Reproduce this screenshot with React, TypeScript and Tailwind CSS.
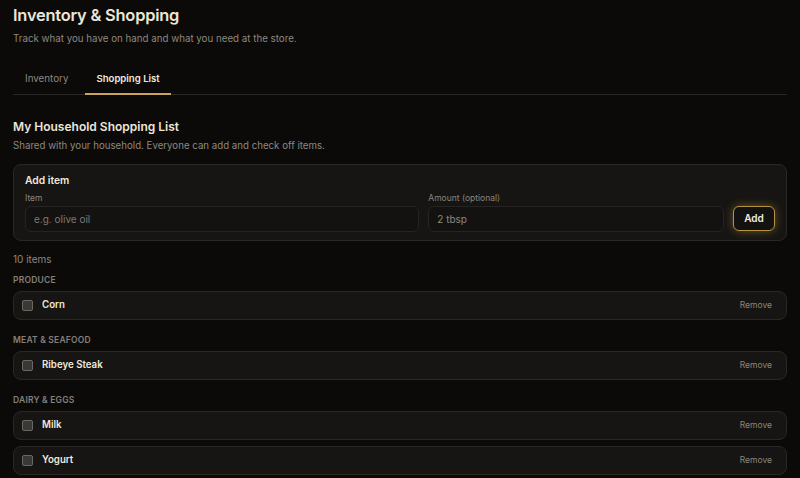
import { useState } from 'react';

type Item = { id: number; name: string; group: string };

const items: Item[] = [
  { id: 1, name: 'Corn', group: 'Produce' },
  { id: 2, name: 'Ribeye Steak', group: 'Meat & Seafood' },
  { id: 3, name: 'Milk', group: 'Dairy & Eggs' },
  { id: 4, name: 'Yogurt', group: 'Dairy & Eggs' },
];

const groups = ['Produce', 'Meat & Seafood', 'Dairy & Eggs'];

function Row({ item }: { item: Item }) {
  const [checked, setChecked] = useState(false);
  return (
    <div className="flex h-[29px] items-center rounded-[8px] border border-[#2a2825] bg-[#161513] pl-[8px] pr-[14px]">
      <button
        onClick={() => setChecked(!checked)}
        className="h-[11px] w-[11px] rounded-[2px] border border-[#6b6761] bg-[#3a3835]"
      />
      <span className="ml-[9px] text-[9.7px] font-semibold text-[#efe9dc]">{item.name}</span>
      <button className="ml-auto text-[8.5px] text-[#8a857d]">Remove</button>
    </div>
  );
}

export default function App() {
  const [tab, setTab] = useState('shopping');

  return (
    <div className="min-h-screen bg-[#0b0a09] px-[13px] pt-[4px] pb-[10px] font-['Inter',sans-serif] text-[#ece6d9]">
      <h1 className="text-[16.4px] font-semibold leading-[22px] tracking-[-0.2px]">Inventory &amp; Shopping</h1>
      <p className="mt-[5px] text-[9.75px] leading-[16px] text-[#8d887f]">
        Track what you have on hand and what you need at the store.
      </p>

      <div className="mt-[19px] flex gap-[5px] border-b border-[#2a2825]">
        <button
          onClick={() => setTab('inventory')}
          className={`-mb-px h-[29px] border-b-2 px-[12px] text-[9.8px] ${
            tab === 'inventory' ? 'border-[#c9a45a] font-semibold text-[#efe9dc]' : 'border-transparent text-[#8d887f]'
          }`}
        >
          Inventory
        </button>
        <button
          onClick={() => setTab('shopping')}
          className={`-mb-px h-[29px] border-b-2 px-[11px] text-[9.6px] ${
            tab === 'shopping' ? 'border-[#c9a45a] font-semibold text-[#efe9dc]' : 'border-transparent text-[#8d887f]'
          }`}
        >
          Shopping List
        </button>
      </div>

      <h2 className="mt-[23px] text-[12px] font-semibold leading-[18px]">My Household Shopping List</h2>
      <p className="mt-[2px] text-[9.7px] leading-[16px] text-[#8d887f]">
        Shared with your household. Everyone can add and check off items.
      </p>

      <div className="mt-[10px] rounded-[8px] border border-[#2a2825] bg-[#161513] px-[11px] pt-[8px] pb-[8px]">
        <div className="text-[10.3px] font-semibold leading-[14px] text-[#efe9dc]">Add item</div>
        <div className="mt-[5px] grid grid-cols-[4fr_3fr_42px] items-end gap-x-[9px]">
          <label className="block">
            <span className="block text-[8.5px] leading-[12px] text-[#8a857d]">Item</span>
            <input
              placeholder="e.g. olive oil"
              className="mt-[2px] h-[26px] w-full rounded-[6px] border border-[#262421] bg-[#131211] px-[8px] text-[10px] text-[#efe9dc] outline-none placeholder:text-[#7d7870]"
            />
          </label>
          <label className="block">
            <span className="block text-[8.5px] leading-[12px] text-[#8a857d]">Amount (optional)</span>
            <input
              placeholder="2 tbsp"
              className="mt-[2px] h-[26px] w-full rounded-[6px] border border-[#262421] bg-[#131211] px-[8px] text-[10px] text-[#efe9dc] outline-none placeholder:text-[#8d887f]"
            />
          </label>
          <button className="mb-[1px] h-[25px] rounded-[6px] border border-[#b8933f] bg-[#141210] text-[10px] font-semibold text-[#f3eee3] shadow-[0_0_10px_rgba(201,160,70,0.45)]">
            Add
          </button>
        </div>
      </div>

      <div className="mt-[11px] text-[10px] leading-[14px] text-[#8d887f]">10 items</div>

      <div className="mt-[8px] flex flex-col gap-[14px]">
        {groups.map((g) => (
          <div key={g}>
            <div className="text-[8.5px] font-semibold uppercase leading-[12px] tracking-[0.2px] text-[#85807a]">{g}</div>
            <div className="mt-[5px] flex flex-col gap-[6px]">
              {items
                .filter((i) => i.group === g)
                .map((i) => (
                  <Row key={i.id} item={i} />
                ))}
            </div>
          </div>
        ))}
      </div>
    </div>
  );
}
